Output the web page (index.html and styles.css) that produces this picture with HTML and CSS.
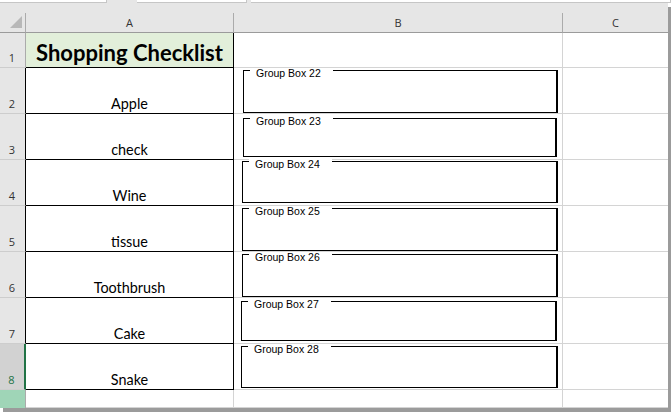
FILE: index.html
```html
<!DOCTYPE html>
<html>
<head>
<meta charset="utf-8">
<link rel="stylesheet" href="styles.css">
</head>
<body>
<div class="tabs"><span class="tab t1"></span><span class="tgap g1"></span><span class="tab t2"></span><span class="tgap g2"></span><span class="tab t3"></span></div>
<div class="sheet">
  <div class="toppad"></div>
  <div class="grid">
    <div class="corner"><span class="tri"></span></div>
    <div class="colhdr">A</div>
    <div class="colhdr">B</div>
    <div class="colhdr last">C</div>

    <div class="rowhdr r1">1</div>
    <div class="cell a title">Shopping Checklist</div>
    <div class="cell b"></div>
    <div class="cell c"></div>

    <div class="rowhdr">2</div>
    <div class="cell a item">Apple</div>
    <div class="cell b"><div class="gb g22"><span class="lg">Group Box 22</span></div></div>
    <div class="cell c"></div>

    <div class="rowhdr">3</div>
    <div class="cell a item">check</div>
    <div class="cell b"><div class="gb g23"><span class="lg">Group Box 23</span></div></div>
    <div class="cell c"></div>

    <div class="rowhdr">4</div>
    <div class="cell a item">Wine</div>
    <div class="cell b"><div class="gb g24"><span class="lg">Group Box 24</span></div></div>
    <div class="cell c"></div>

    <div class="rowhdr">5</div>
    <div class="cell a item">tissue</div>
    <div class="cell b"><div class="gb g25"><span class="lg">Group Box 25</span></div></div>
    <div class="cell c"></div>

    <div class="rowhdr">6</div>
    <div class="cell a item">Toothbrush</div>
    <div class="cell b"><div class="gb g26"><span class="lg">Group Box 26</span></div></div>
    <div class="cell c"></div>

    <div class="rowhdr">7</div>
    <div class="cell a item">Cake</div>
    <div class="cell b"><div class="gb g27"><span class="lg">Group Box 27</span></div></div>
    <div class="cell c"></div>

    <div class="rowhdr sel">8</div>
    <div class="cell a item">Snake</div>
    <div class="cell b"><div class="gb g28"><span class="lg">Group Box 28</span></div></div>
    <div class="cell c"></div>

    <div class="rowhdr r9"></div>
    <div class="cell a9"></div>
    <div class="cell b"></div>
    <div class="cell c"></div>
  </div>
</div>
</body>
</html>
```
FILE: styles.css
```css
* { box-sizing: border-box; }
html, body { margin: 0; padding: 0; background: #ffffff; }
body { width: 671px; height: 412px; overflow: hidden; font-family: "Open Sans", "Noto Sans", sans-serif; }

.tabs { display: flex; height: 3px; background: #e6e6e6; }
.tab { display: block; height: 3px; background: #fff; border-bottom: 1px solid #c6c6c6; border-right: 1px solid #c6c6c6; }
.t1 { width: 107px; }
.g1 { width: 30px; }
.t2 { width: 110px; }
.g2 { width: 4px; }
.t3 { flex: 1; }
.tgap { display: block; height: 3px; background: #e6e6e6; }

.sheet { width: 668px; height: 405px; background: #e6e6e6; box-shadow: 3px 4px 0 #9b9b9b; }
.toppad { height: 10px; }

.grid {
  display: grid;
  grid-template-columns: 26px 208px 329px 105px;
  grid-template-rows: 20px 35px repeat(7, 46px) 18px;
  background: #fff;
}

.corner { background: #e6e6e6; border-right: 1px solid #ababab; border-bottom: 1px solid #9b9b9b; position: relative; }
.tri { position: absolute; right: 3px; bottom: 4px; width: 0; height: 0; border-left: 12px solid transparent; border-bottom: 12px solid #b8b8b8; }

.colhdr {
  background: #e6e6e6; border-right: 1px solid #ababab; border-bottom: 1px solid #9b9b9b;
  display: flex; align-items: center; justify-content: center;
  font-size: 11px; color: #333; padding-top: 0;
}
.colhdr.last { border-right: none; }

.rowhdr {
  background: #e6e6e6; border-right: 1px solid #000; border-bottom: 1px solid #cdcdcd;
  display: flex; align-items: flex-end; justify-content: center;
  font-size: 11px; color: #333; padding-bottom: 2px; padding-right: 1px;
}
.rowhdr.r1 { border-right-color: #ababab; }
.rowhdr.sel { background: #d2d2d2; border-right: 2px solid #217346; color: #217346; }
.rowhdr.r9 { background: #9fd5b7; border-right: 1px solid #ababab; border-bottom: none; }

.cell { border-right: 1px solid #d4d4d4; border-bottom: 1px solid #d4d4d4; background: #fff; }
.cell.c { border-right: none; }
.cell.a { border-right: 1px solid #000; border-bottom: 1px solid #000; }
.cell.a9 { border-right: 1px solid #d4d4d4; }
.title {
  background: #e2efda; display: flex; align-items: flex-end; justify-content: center;
  font-family: "Lato", sans-serif; font-weight: 700; font-size: 22px; line-height: 26px; padding-bottom: 1px; color: #000;
}
.item {
  display: flex; align-items: flex-end; justify-content: center;
  font-family: "Lato", sans-serif; font-size: 14.4px; line-height: 17px; padding-bottom: 1px; color: #000;
}

.gb { position: relative; border: 1px solid #000; border-right-width: 2px; }
.lg {
  position: absolute; top: -3px; left: 6px; padding: 0 12px 0 6px; background: #fff;
  font-family: "Liberation Sans", sans-serif; font-size: 10.5px; line-height: 11px; color: #000;
}
.g22 { margin: 2px 0 0 9px; width: 315px; height: 43px; }
.g23 { margin: 4px 0 0 9px; width: 314px; height: 39px; }
.g24 { margin: 1px 0 0 8px; width: 316px; height: 42px; }
.g25 { margin: 2px 0 0 8px; width: 316px; height: 43px; }
.g26 { margin: 2px 0 0 8px; width: 316px; height: 43px; }
.g27 { margin: 3px 0 0 7px; width: 316px; height: 40px; }
.g28 { margin: 2px 0 0 7px; width: 317px; height: 42px; }
```
